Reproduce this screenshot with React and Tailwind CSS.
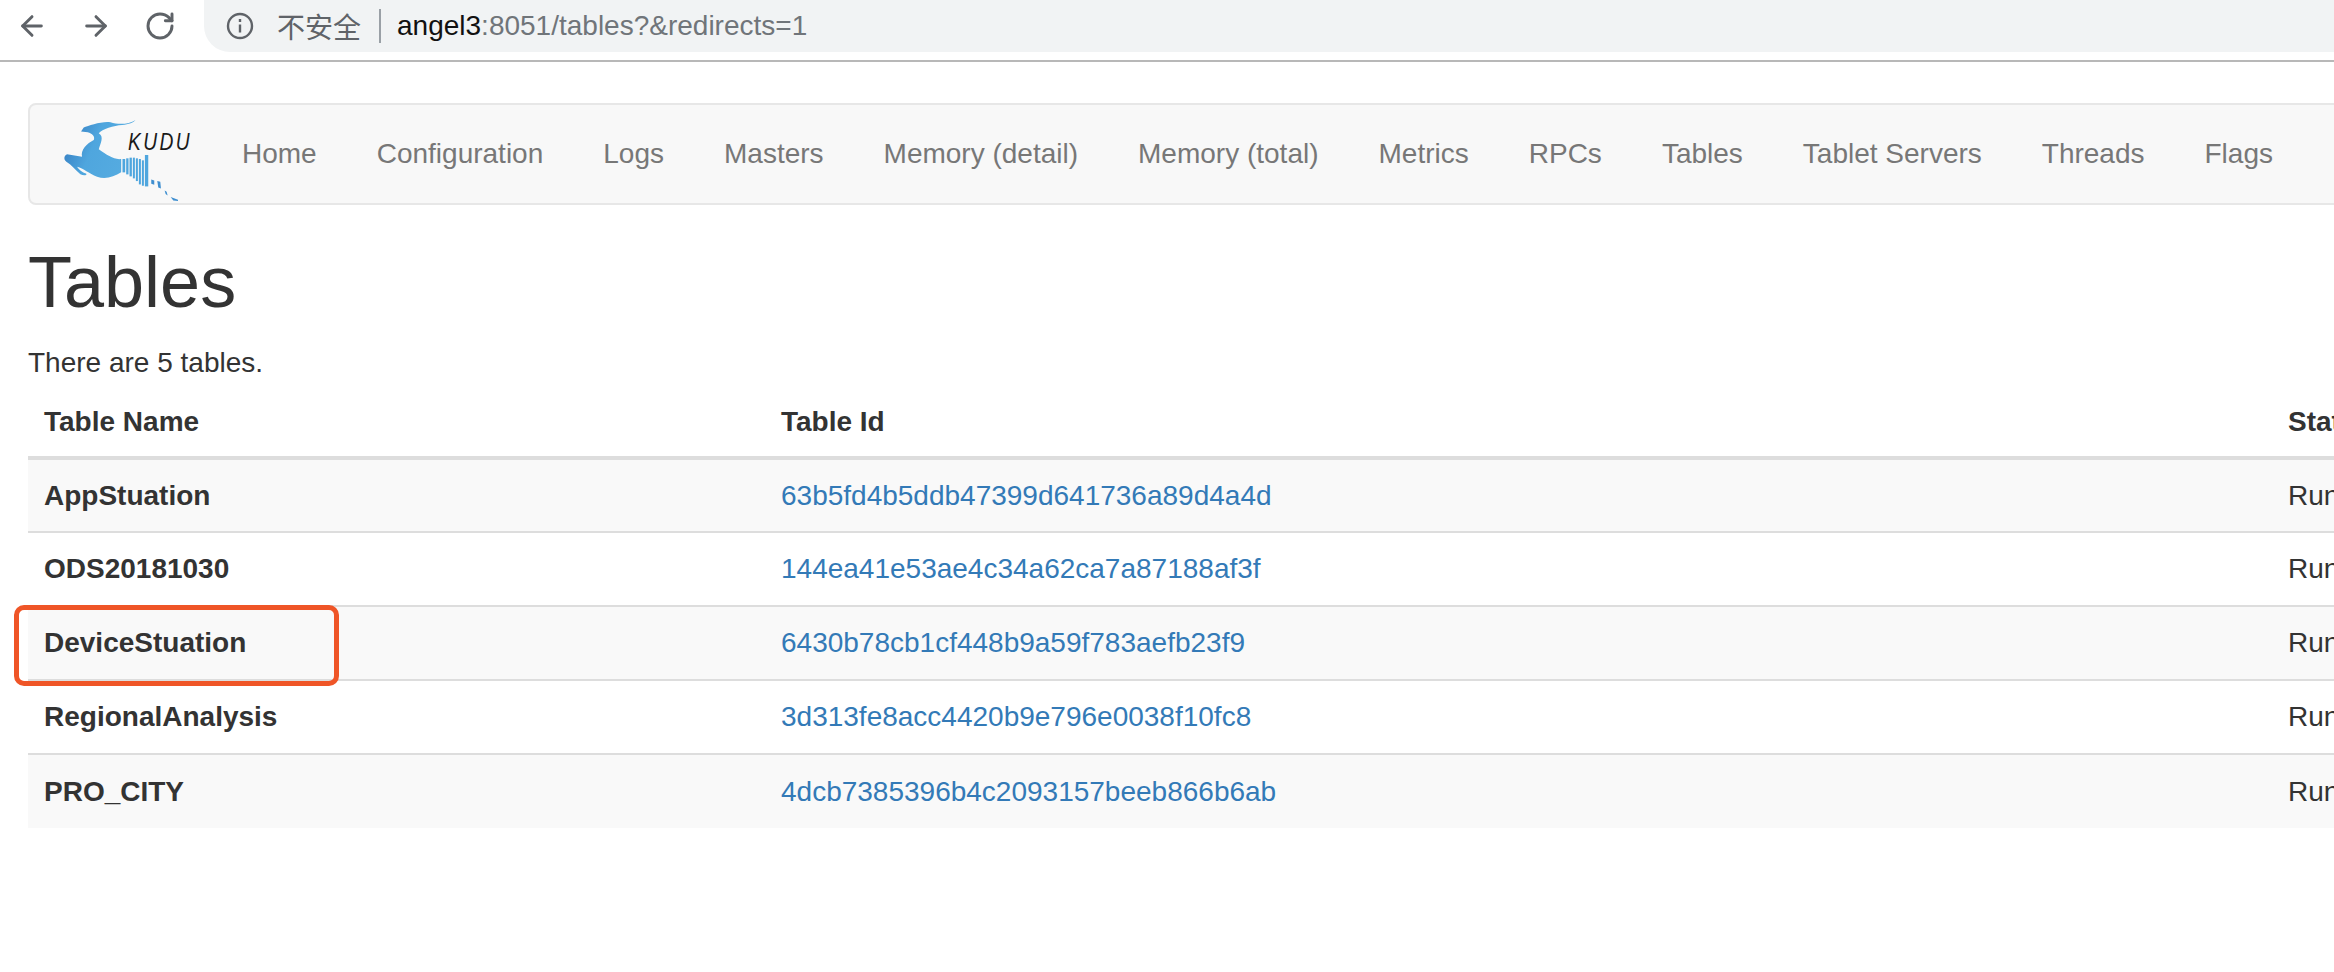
import React from "react";
import { ArrowLeft, ArrowRight, RotateCw } from "lucide-react";

const navItems = ["Home","Configuration","Logs","Masters","Memory (detail)","Memory (total)","Metrics","RPCs","Tables","Tablet Servers","Threads","Flags"];
const rows = [
  ["AppStuation","63b5fd4b5ddb47399d641736a89d4a4d"],
  ["ODS20181030","144ea41e53ae4c34a62ca7a87188af3f"],
  ["DeviceStuation","6430b78cb1cf448b9a59f783aefb23f9"],
  ["RegionalAnalysis","3d313fe8acc4420b9e796e0038f10fc8"],
  ["PRO_CITY","4dcb7385396b4c2093157beeb866b6ab"],
];
const stripes = [[276,172,8,40],[287,170,7,48],[297,168,7,56],[307,168,6,62],[316,170,6,68],[325,172,6,76],[334,176,6,76],[343,160,10,94]];

function Logo() {
  return (
    <div className="relative w-[117px] h-[84px] shrink-0">
      <svg viewBox="95 50 350 250" className="w-[117px] h-[84px]">
        <defs>
          <linearGradient id="kudu" x1="0" y1="0" x2="1" y2="0.35">
            <stop offset="0" stopColor="#2f73ba" />
            <stop offset="0.5" stopColor="#4fa6de" />
            <stop offset="1" stopColor="#55abe0" />
          </linearGradient>
        </defs>
        <path fill="url(#kudu)" d="M315 55C295 68 265 70 240 62C215 58 175 72 160 78L152 90L172 92C185 95 195 105 190 115C170 125 150 145 155 165L110 158C100 162 100 175 108 180C125 190 135 205 150 218C158 222 170 222 168 216C155 212 145 202 140 195C160 200 175 215 200 225C225 235 250 225 272 212L272 172C250 175 230 160 205 143C210 125 222 105 205 95C215 82 250 72 275 70C295 68 310 62 315 55Z" />
        {stripes.map(([x,y,w,h],i)=>(<rect key={i} x={x} y={y} width={w} height={h} fill="#4fa6de" />))}
        <path fill="#3f8fd0" d="M362 233l9 3v13l-9-3zM380 238l9 2 2 20-8-3zM402 266l6 4 3 11-6-4zM420 286l22 8v4l-14-2z" />
      </svg>
      <span className="absolute left-[66px] top-[12px] text-[24px] leading-[24px] italic tracking-[3px] text-[#1a1a1a] font-['Liberation_Sans',sans-serif] scale-x-[0.8] origin-left">KUDU</span>
    </div>
  );
}

export default function App() {
  return (
    <div className="w-[2334px] h-[972px] overflow-hidden bg-white font-['Liberation_Sans',Arial,sans-serif] text-[28px] text-[#333]">
      <div className="h-[62px] border-b-2 border-[#b8b8b8] flex items-start">
        <div className="h-[52px] flex items-center text-[#5f6368] pl-[16px]">
          <ArrowLeft size={32} strokeWidth={2.2} />
          <ArrowRight size={32} strokeWidth={2.2} className="ml-[32px]" />
          <RotateCw size={32} strokeWidth={2.2} className="ml-[32px]" />
        </div>
        <div className="ml-[28px] flex-1 h-[52px] bg-[#f1f3f4] rounded-bl-[26px] flex items-center pl-[22px]">
          <svg viewBox="0 0 28 28" className="w-[28px] h-[28px] text-[#5f6368]" fill="none" stroke="currentColor" strokeWidth="2.4">
            <circle cx="14" cy="14" r="12" />
            <path d="M14 12.5v8M14 7v3" />
          </svg>
          <span className="ml-[23px] text-[#5f6368] font-['Noto_Sans_CJK_SC',sans-serif] leading-none">不安全</span>
          <span className="ml-[18px] w-[2px] h-[34px] bg-[#9aa0a6]" />
          <span className="ml-[16px] text-[#70757a] text-[28px] leading-none"><span className="text-[#111]">angel3</span>:8051/tables?&amp;redirects=1</span>
        </div>
      </div>

      <div className="mt-[41px] ml-[28px] h-[102px] w-[2400px] bg-[#f8f8f8] border-2 border-[#e7e7e7] rounded-l-[8px] flex items-center pl-[32px]">
        <div className="mt-[12px]"><Logo /></div>
        <div className="flex ml-[33px] text-[#777]">
          {navItems.map((n)=>(<a key={n} className="px-[30px] whitespace-nowrap">{n}</a>))}
        </div>
      </div>

      <h1 className="mt-[37px] ml-[28px] text-[72px] leading-[80px] font-normal text-[#333]">Tables</h1>
      <p className="mt-[21px] ml-[28px] leading-[40px] text-[#333]">There are 5 tables.</p>

      <div className="relative ml-[28px] mt-[4px]">
        <table className="table-fixed w-[2600px] border-collapse">
          <colgroup>
            <col className="w-[737px]" />
            <col className="w-[1507px]" />
            <col />
          </colgroup>
          <thead>
            <tr className="h-[71px] border-b-4 border-[#ddd] text-left">
              <th className="px-4 font-bold">Table Name</th>
              <th className="px-4 font-bold">Table Id</th>
              <th className="px-4 font-bold">State</th>
            </tr>
          </thead>
          <tbody>
            {rows.map(([a,b],i)=>(
              <tr key={a} className={`h-[74px] ${i>0?"border-t-2 border-[#ddd]":""} ${i%2===0?"bg-[#f9f9f9]":"bg-white"}`}>
                <td className="px-4 font-bold">{a}</td>
                <td className="px-4 text-[#337ab7]">{b}</td>
                <td className="px-4">Running</td>
              </tr>
            ))}
          </tbody>
        </table>
        <div className="absolute left-[-14px] top-[218px] w-[325px] h-[81px] border-[5px] border-[#ef5527] rounded-[10px]" />
      </div>
    </div>
  );
}
